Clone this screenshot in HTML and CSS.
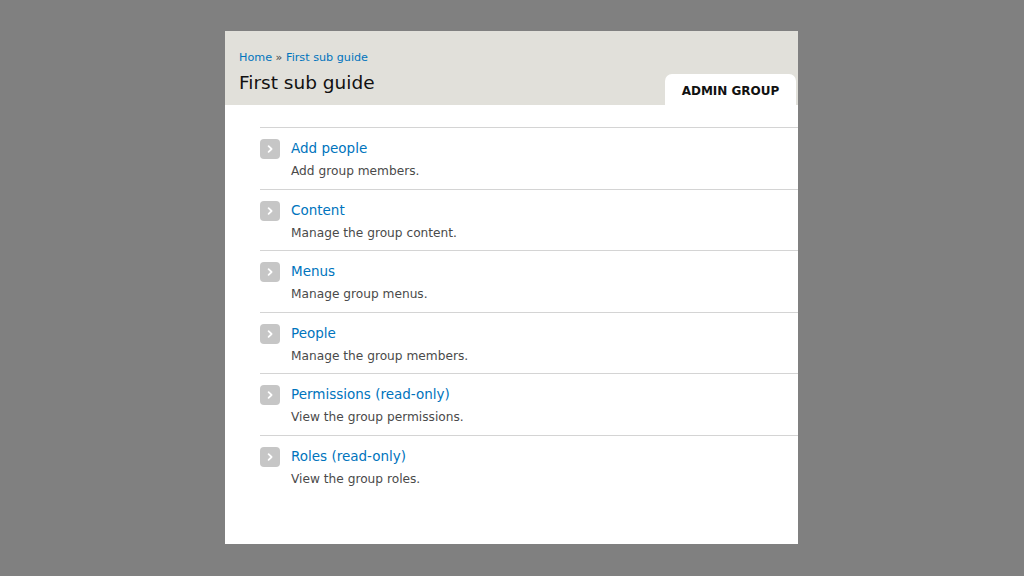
FILE: index.html
```html
<!DOCTYPE html>
<html lang="en">
<head>
<meta charset="utf-8">
<title>First sub guide</title>
<link rel="stylesheet" href="styles.css">
</head>
<body>
<div class="panel">
  <header class="head">
    <div class="head-text">
      <nav class="crumbs"><a href="#">Home</a> <span class="sep">»</span> <a href="#">First sub guide</a></nav>
      <h1 class="title">First sub guide</h1>
    </div>
    <div class="tab">ADMIN GROUP</div>
  </header>
  <ul class="list">
    <li class="item"><span class="icon"><svg viewBox="0 0 20 20" width="20" height="20"><path d="M8.6 7.2 L11.6 10 L8.6 12.8" fill="none" stroke="#fff" stroke-width="1.8" stroke-linecap="round" stroke-linejoin="round"/></svg></span><div><a class="link" href="#">Add people</a><p class="desc">Add group members.</p></div></li>
    <li class="item"><span class="icon"><svg viewBox="0 0 20 20" width="20" height="20"><path d="M8.6 7.2 L11.6 10 L8.6 12.8" fill="none" stroke="#fff" stroke-width="1.8" stroke-linecap="round" stroke-linejoin="round"/></svg></span><div><a class="link" href="#">Content</a><p class="desc">Manage the group content.</p></div></li>
    <li class="item"><span class="icon"><svg viewBox="0 0 20 20" width="20" height="20"><path d="M8.6 7.2 L11.6 10 L8.6 12.8" fill="none" stroke="#fff" stroke-width="1.8" stroke-linecap="round" stroke-linejoin="round"/></svg></span><div><a class="link" href="#">Menus</a><p class="desc">Manage group menus.</p></div></li>
    <li class="item"><span class="icon"><svg viewBox="0 0 20 20" width="20" height="20"><path d="M8.6 7.2 L11.6 10 L8.6 12.8" fill="none" stroke="#fff" stroke-width="1.8" stroke-linecap="round" stroke-linejoin="round"/></svg></span><div><a class="link" href="#">People</a><p class="desc">Manage the group members.</p></div></li>
    <li class="item"><span class="icon"><svg viewBox="0 0 20 20" width="20" height="20"><path d="M8.6 7.2 L11.6 10 L8.6 12.8" fill="none" stroke="#fff" stroke-width="1.8" stroke-linecap="round" stroke-linejoin="round"/></svg></span><div><a class="link" href="#">Permissions (read-only)</a><p class="desc">View the group permissions.</p></div></li>
    <li class="item"><span class="icon"><svg viewBox="0 0 20 20" width="20" height="20"><path d="M8.6 7.2 L11.6 10 L8.6 12.8" fill="none" stroke="#fff" stroke-width="1.8" stroke-linecap="round" stroke-linejoin="round"/></svg></span><div><a class="link" href="#">Roles (read-only)</a><p class="desc">View the group roles.</p></div></li>
  </ul>
</div>
</body>
</html>
```
FILE: styles.css
```css
html, body {
  margin: 0;
  padding: 0;
}
body {
  background: #808080;
  width: 1024px;
  height: 576px;
  overflow: hidden;
  font-family: "DejaVu Sans", Verdana, sans-serif;
  padding-top: 31px;
  box-sizing: border-box;
}
.panel {
  margin-left: 225px;
  width: 573px;
  height: 513px;
  background: #fff;
}
.head {
  background: #e1e0da;
  height: 74px;
  display: flex;
  justify-content: space-between;
  align-items: flex-end;
  padding-left: 14px;
  padding-right: 2px;
}
.head-text {
  align-self: flex-start;
  padding-top: 20px;
}
.crumbs {
  font-size: 11.2px;
  line-height: 14px;
  color: #333;
}
.crumbs a {
  color: #0074bd;
  text-decoration: none;
}
.crumbs .sep {
  color: #444;
}
.title {
  margin: 6px 0 0;
  font-size: 18.5px;
  line-height: 24px;
  font-weight: normal;
  color: #111;
}
.tab {
  width: 131px;
  height: 31px;
  box-sizing: border-box;
  background: #fff;
  border-radius: 7px 7px 0 0;
  font-size: 12px;
  font-weight: bold;
  color: #111;
  text-align: center;
  line-height: 34px;
}
.list {
  list-style: none;
  margin: 22px 0 0 35px;
  padding: 0;
}
.item {
  border-top: 1px solid #d4d4d4;
  display: flex;
  gap: 11px;
  padding: 10px 0 7.6px;
}
.icon {
  width: 20px;
  height: 20px;
  border-radius: 4px;
  background: #c6c6c6;
  flex: none;
  display: block;
  margin-top: 1px;
}
.icon svg {
  display: block;
}
.link {
  display: block;
  font-size: 13.5px;
  line-height: 20px;
  color: #0074bd;
  text-decoration: none;
}
.desc {
  margin: 3px 0 0;
  font-size: 12.2px;
  line-height: 20px;
  color: #4a4a4a;
}
```
